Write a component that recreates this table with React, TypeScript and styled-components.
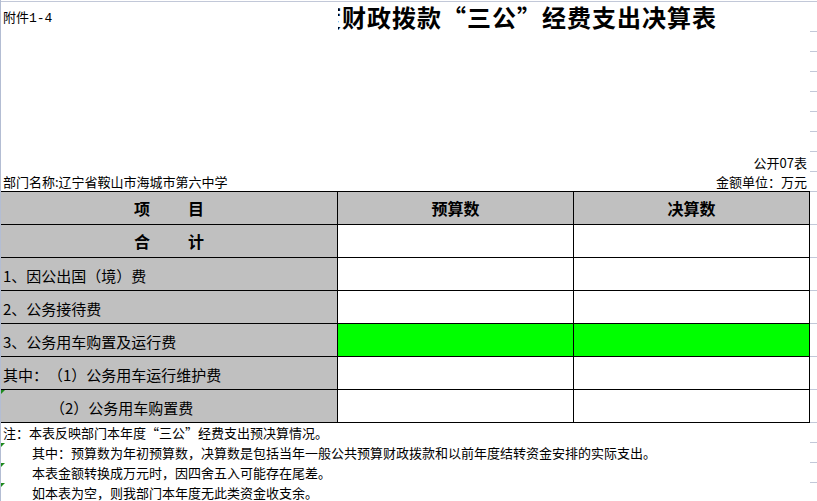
import React from "react";
import styled, { createGlobalStyle, css } from "styled-components";

const GRID = "#c2c8d8";
const EDGE = "#b3bdd3";
const MARK = "#1f8a1f";
const COLS = "337px 236px 236px 7px";

const Global = createGlobalStyle`
  html, body { margin: 0; padding: 0; background: #fff; }
  body {
    width: 817px;
    height: 501px;
    overflow: hidden;
    color: #000;
    font-family: "Noto Sans CJK SC", "Liberation Sans", sans-serif;
    text-spacing-trim: space-all;
  }
`;

const Sheet = styled.div`
  width: 817px;
  height: 501px;
  box-sizing: border-box;
  padding-top: 1px;
  border-left: 1px solid ${EDGE};
  display: flex;
  flex-direction: column;
  overflow: hidden;
  text-spacing-trim: space-all;
`;

const TopLine = styled.div`
  border-top: 1px solid ${GRID};
`;

const SheetRow = styled.div<{ $h: number }>`
  display: grid;
  grid-template-columns: ${COLS};
  height: ${(p) => p.$h}px;
  flex: none;
  position: relative;
`;

const Gutter = styled.div<{ $line?: boolean }>`
  grid-column: 4;
  box-sizing: border-box;
  height: 100%;
  ${(p) => p.$line !== false && css`border-bottom: 1px solid ${GRID};`}
`;

const Attach = styled.div`
  grid-column: 1;
  font-size: 13px;
  font-family: "Liberation Mono", "Noto Sans CJK SC", monospace;
  padding-left: 2px;
  display: flex;
  align-items: center;
  padding-bottom: 1px;
`;

const TitleClip = styled.div`
  grid-column: 2 / 4;
  overflow: hidden;
  white-space: nowrap;
  display: flex;
  align-items: center;
`;

const Title = styled.h1`
  margin: 0 0 0 -21px;
  font-size: 24px;
  font-weight: 700;
  letter-spacing: 1px;
  line-height: 28px;
`;

const RightNote = styled.div`
  grid-column: 1 / 4;
  display: flex;
  align-items: center;
  justify-content: flex-end;
  padding-right: 3px;
  font-size: 13px;
  white-space: nowrap;
`;

const DeptName = styled.div`
  grid-column: 1 / 3;
  display: flex;
  align-items: center;
  padding-left: 2px;
  font-size: 13px;
  white-space: nowrap;
`;

const Unit = styled.div`
  grid-column: 3;
  display: flex;
  align-items: center;
  justify-content: flex-end;
  padding-right: 3px;
  font-size: 13px;
  white-space: nowrap;
`;

const Table = styled.div`
  display: grid;
  grid-template-columns: ${COLS};
  grid-template-rows: 34px repeat(6, 33px);
  flex: none;
`;

const markCss = css`
  &::before {
    content: "";
    position: absolute;
    left: 0;
    top: 0;
    border-top: 4px solid ${MARK};
    border-right: 4px solid transparent;
  }
`;

const Cell = styled.div<{
  $first?: boolean;
  $fill?: "grey" | "white" | "green";
  $head?: boolean;
  $align?: "left" | "center";
  $indent?: number;
  $mark?: boolean;
}>`
  position: relative;
  box-sizing: border-box;
  border-right: 1px solid #000;
  border-bottom: 1px solid #000;
  ${(p) => p.$first && css`border-top: 1px solid #000;`}
  background: ${(p) =>
    p.$fill === "green" ? "#00ff00" : p.$fill === "grey" ? "#c0c0c0" : "#fff"};
  display: flex;
  align-items: center;
  justify-content: ${(p) => (p.$align === "left" ? "flex-start" : "center")};
  padding-left: ${(p) => p.$indent ?? 0}px;
  padding-top: ${(p) => (p.$head ? 0 : 2)}px;
  font-size: ${(p) => (p.$head ? 16 : 15)}px;
  font-weight: ${(p) => (p.$head ? 700 : 400)};
  white-space: nowrap;
  ${(p) => p.$mark && markCss}
  ${(p) =>
    p.$mark &&
    css`
      &::after {
        content: "";
        position: absolute;
        left: -1px;
        top: -6px;
        bottom: -1px;
        width: 1px;
        background: ${MARK};
      }
    `}
`;

const TableGutter = styled.div<{ $first?: boolean }>`
  box-sizing: border-box;
  border-bottom: 1px solid ${GRID};
  ${(p) => p.$first && css`border-top: 1px solid ${GRID};`}
`;

const Spread = styled.span`
  display: inline-flex;
  gap: 38px;
`;

const NoteRow = styled.div<{ $mark?: boolean }>`
  display: grid;
  grid-template-columns: ${COLS};
  height: 20px;
  flex: none;
  position: relative;
  ${(p) => p.$mark && markCss}
`;

const NoteText = styled.div<{ $indent: number }>`
  grid-column: 1 / 4;
  font-size: 13px;
  line-height: 16px;
  white-space: nowrap;
  display: flex;
  align-items: center;
  padding-left: ${(p) => p.$indent}px;
`;

type Row = {
  label: React.ReactNode;
  center?: boolean;
  indent?: number;
  green?: boolean;
  mark?: boolean;
  bold?: boolean;
};

const rows: Row[] = [
  { label: <Spread><span>合</span><span>计</span></Spread>, center: true, bold: true },
  { label: "1、因公出国（境）费" },
  { label: "2、公务接待费" },
  { label: "3、公务用车购置及运行费", green: true },
  { label: "其中：（1）公务用车运行维护费" },
  { label: "（2）公务用车购置费", indent: 49, mark: true },
];

const notes = [
  { text: "注：本表反映部门本年度“三公”经费支出预决算情况。", indent: 2 },
  { text: "其中：预算数为年初预算数，决算数是包括当年一般公共预算财政拨款和以前年度结转资金安排的实际支出。", indent: 31, mark: true },
  { text: "本表金额转换成万元时，因四舍五入可能存在尾差。", indent: 31, mark: true },
  { text: "如本表为空，则我部门本年度无此类资金收支余。", indent: 31, mark: true },
];

export default function App() {
  return (
    <>
      <Global />
      <Sheet>
        <TopLine />
        <SheetRow $h={30}>
          <Attach>附件1-4</Attach>
          <TitleClip>
            <Title>度财政拨款“三公”经费支出决算表</Title>
          </TitleClip>
          <Gutter />
        </SheetRow>
        {[0, 1, 2, 3, 4, 5].map((i) => (
          <SheetRow $h={20} key={i}>
            <Gutter />
          </SheetRow>
        ))}
        <SheetRow $h={20}>
          <RightNote>公开07表</RightNote>
          <Gutter />
        </SheetRow>
        <SheetRow $h={19}>
          <DeptName>部门名称:辽宁省鞍山市海城市第六中学</DeptName>
          <Unit>金额单位：万元</Unit>
          <Gutter $line={false} />
        </SheetRow>
        <Table>
          <Cell $first $fill="grey" $head>
            <Spread><span>项</span><span>目</span></Spread>
          </Cell>
          <Cell $first $fill="grey" $head>预算数</Cell>
          <Cell $first $fill="grey" $head>决算数</Cell>
          <TableGutter $first />
          {rows.map((r, i) => (
            <React.Fragment key={i}>
              <Cell
                $fill="grey"
                $head={r.bold}
                $align={r.center ? "center" : "left"}
                $indent={r.center ? 0 : r.indent ?? 2}
                $mark={r.mark}
              >
                {r.label}
              </Cell>
              <Cell $fill={r.green ? "green" : "white"} />
              <Cell $fill={r.green ? "green" : "white"} />
              <TableGutter />
            </React.Fragment>
          ))}
        </Table>
        {notes.map((n, i) => (
          <NoteRow key={i} $mark={n.mark}>
            <NoteText $indent={n.indent}>{n.text}</NoteText>
            <Gutter />
          </NoteRow>
        ))}
      </Sheet>
    </>
  );
}
